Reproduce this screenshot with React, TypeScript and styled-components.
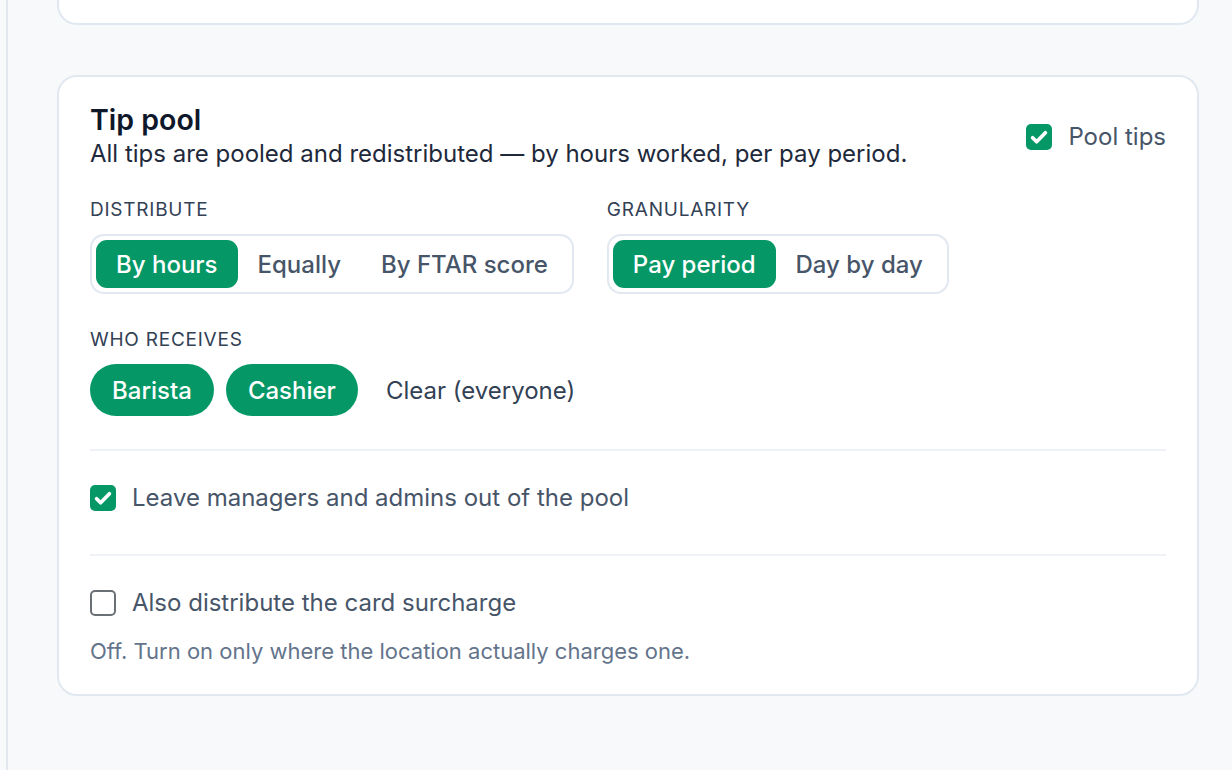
import React, { useState } from 'react';
import styled, { createGlobalStyle } from 'styled-components';

const GlobalStyle = createGlobalStyle`
  html, body {
    margin: 0;
    padding: 0;
    background: #f7f9fb;
    font-family: Inter, "Noto Sans", "Liberation Sans", sans-serif;
    -webkit-font-smoothing: antialiased;
  }
  * { box-sizing: border-box; }
`;

const Page = styled.div`
  display: flex;
  min-height: 100vh;
  background: #f7f9fb;
`;

const Rail = styled.div`
  width: 8px;
  flex-shrink: 0;
  border-right: 2px solid #e3e8ef;
`;

const Main = styled.main`
  flex: 1;
  padding: 0 33px 40px 49px;
  display: flex;
  flex-direction: column;
  gap: 50px;
`;

const PrevCard = styled.div`
  height: 25px;
  background: #fff;
  border: 2px solid #e2e8f0;
  border-top: none;
  border-radius: 0 0 20px 20px;
`;

const Card = styled.section`
  background: #fff;
  border: 2px solid #e2e8f0;
  border-radius: 20px;
  padding: 26px 31px 29px 31px;
`;

const Header = styled.div`
  display: flex;
  justify-content: space-between;
  align-items: flex-start;
`;

const Title = styled.h2`
  margin: 0;
  font-size: 28.5px;
  line-height: 34px;
  font-weight: 600;
  color: #0f172a;
`;

const Subtitle = styled.p`
  margin: 2px 0 0;
  font-size: 24px;
  line-height: 30px;
  color: #1e293b;
`;

const Groups = styled.div`
  display: flex;
  gap: 33px;
  margin-top: 29px;
`;

const Group = styled.div`
  display: flex;
  flex-direction: column;
  gap: 12px;
`;

const Label = styled.div`
  font-size: 19px;
  line-height: 24px;
  letter-spacing: 0.04em;
  text-transform: uppercase;
  color: #334155;
`;

const Segmented = styled.div`
  display: inline-flex;
  align-self: flex-start;
  padding: 4px;
  border: 2px solid #e2e8f0;
  border-radius: 14px;
  background: #fff;
`;

const SegButton = styled.button<{ $active?: boolean }>`
  height: 48px;
  padding: 0 20px;
  border: none;
  border-radius: 11px;
  font-family: inherit;
  font-size: 24px;
  font-weight: 500;
  cursor: pointer;
  background: ${(p) => (p.$active ? '#059866' : 'transparent')};
  color: ${(p) => (p.$active ? '#fff' : '#475569')};
`;

const Receivers = styled.div`
  display: flex;
  flex-direction: column;
  gap: 12px;
  margin-top: 34px;
`;

const ChipRow = styled.div`
  display: flex;
  align-items: center;
  gap: 12px;
`;

const Chip = styled.button`
  height: 52px;
  padding: 0 22px;
  border: none;
  border-radius: 26px;
  background: #059866;
  color: #fff;
  font-family: inherit;
  font-size: 24px;
  font-weight: 500;
  cursor: pointer;
`;

const TextButton = styled.button`
  height: 52px;
  padding: 0 16px;
  border: none;
  background: transparent;
  color: #334155;
  font-family: inherit;
  font-size: 24px;
  cursor: pointer;
`;

const Divider = styled.hr<{ $top: number }>`
  border: none;
  height: 2px;
  background: #eef1f5;
  margin: ${(p) => p.$top}px 0 0;
`;

const Option = styled.div<{ $bottom: number }>`
  padding: 32px 0 ${(p) => p.$bottom}px;
`;

const CheckRow = styled.div<{ $offset?: number }>`
  display: flex;
  align-items: center;
  gap: 16px;
  margin-top: ${(p) => p.$offset ?? 0}px;
  font-size: 24px;
  line-height: 30px;
  color: #475569;
  cursor: pointer;
  white-space: nowrap;
`;

const Box = styled.span<{ $checked?: boolean }>`
  width: 26px;
  height: 26px;
  flex-shrink: 0;
  border-radius: 5px;
  display: flex;
  align-items: center;
  justify-content: center;
  background: ${(p) => (p.$checked ? '#059866' : '#fff')};
  border: ${(p) => (p.$checked ? 'none' : '2px solid #6b6f76')};
`;

const Helper = styled.div`
  margin-top: 19px;
  font-size: 22px;
  line-height: 28px;
  color: #64748b;
`;

const Check = ({ checked }: { checked: boolean }) => (
  <Box $checked={checked}>
    {checked && (
      <svg width="22" height="22" viewBox="0 0 24 24" fill="none">
        <path d="M5 12.8l4.4 4.4L19 7.4" stroke="#fff" strokeWidth="4" strokeLinecap="round" strokeLinejoin="round" />
      </svg>
    )}
  </Box>
);

export default function App() {
  const [pool, setPool] = useState(true);
  const [distribute, setDistribute] = useState('By hours');
  const [granularity, setGranularity] = useState('Pay period');
  const [leaveOut, setLeaveOut] = useState(true);
  const [surcharge, setSurcharge] = useState(false);

  return (
    <>
      <GlobalStyle />
      <Page>
        <Rail />
        <Main>
          <PrevCard />
          <Card>
            <Header>
              <div>
                <Title>Tip pool</Title>
                <Subtitle>All tips are pooled and redistributed — by hours worked, per pay period.</Subtitle>
              </div>
              <CheckRow $offset={19} onClick={() => setPool(!pool)}>
                <Check checked={pool} />
                Pool tips
              </CheckRow>
            </Header>

            <Groups>
              <Group>
                <Label>Distribute</Label>
                <Segmented>
                  {['By hours', 'Equally', 'By FTAR score'].map((o) => (
                    <SegButton key={o} $active={distribute === o} onClick={() => setDistribute(o)}>
                      {o}
                    </SegButton>
                  ))}
                </Segmented>
              </Group>
              <Group>
                <Label>Granularity</Label>
                <Segmented>
                  {['Pay period', 'Day by day'].map((o) => (
                    <SegButton key={o} $active={granularity === o} onClick={() => setGranularity(o)}>
                      {o}
                    </SegButton>
                  ))}
                </Segmented>
              </Group>
            </Groups>

            <Receivers>
              <Label>Who receives</Label>
              <ChipRow>
                <Chip>Barista</Chip>
                <Chip>Cashier</Chip>
                <TextButton>Clear (everyone)</TextButton>
              </ChipRow>
            </Receivers>

            <Divider $top={33} />
            <Option $bottom={41}>
              <CheckRow onClick={() => setLeaveOut(!leaveOut)}>
                <Check checked={leaveOut} />
                Leave managers and admins out of the pool
              </CheckRow>
            </Option>
            <Divider $top={0} />
            <Option $bottom={0}>
              <CheckRow onClick={() => setSurcharge(!surcharge)}>
                <Check checked={surcharge} />
                Also distribute the card surcharge
              </CheckRow>
              <Helper>Off. Turn on only where the location actually charges one.</Helper>
            </Option>
          </Card>
        </Main>
      </Page>
    </>
  );
}
